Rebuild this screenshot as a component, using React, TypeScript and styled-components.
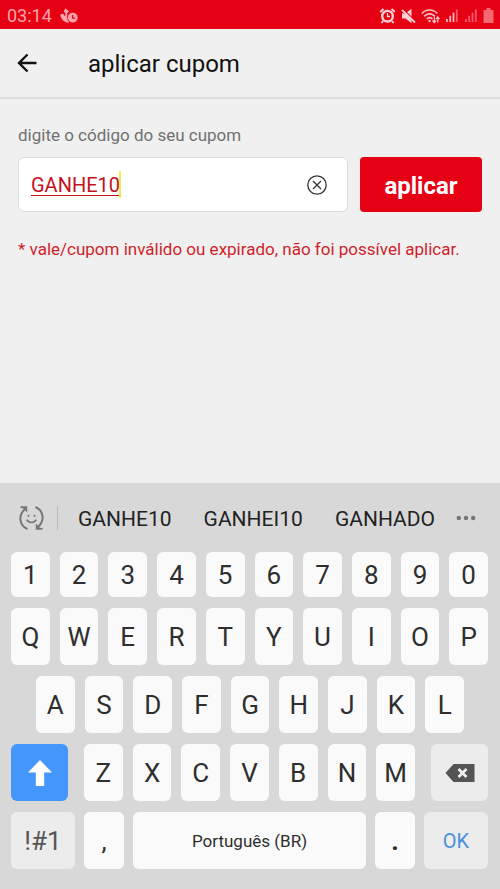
import React, { useState } from "react";
import styled, { createGlobalStyle } from "styled-components";

const GlobalStyle = createGlobalStyle`
  * { box-sizing: border-box; }
  body { margin: 0; background: #f0f0f0; }
  body, button, input { font-family: Roboto, "Liberation Sans", sans-serif; }
  button { margin: 0; padding: 0; border: 0; background: none; color: inherit; cursor: pointer; }
  svg { display: block; flex: none; }
`;

const Screen = styled.div`
  display: flex;
  flex-direction: column;
  min-height: 100vh;
  background: #f0f0f0;
`;

const StatusBar = styled.div`
  display: flex;
  align-items: center;
  height: 29px;
  padding: 2px 6px 0 7px;
  background: #e60014;
  color: #ffa3aa;
`;

const Clock = styled.time`
  margin-right: 8px;
  font-size: 18px;
  line-height: 24px;
`;

const StatusIcons = styled.div`
  display: flex;
  align-items: center;
  gap: 5px;
  margin-left: auto;
`;

const Header = styled.header`
  display: flex;
  align-items: center;
  height: 70px;
  padding: 0 16px;
  border-bottom: 2px solid #dcdcdc;
`;

const BackButton = styled.button`
  margin-right: 50px;
  color: #111;
`;

const Title = styled.h1`
  margin: 0;
  padding-top: 2px;
  font-size: 24px;
  line-height: 32px;
  font-weight: 400;
  color: #111;
`;

const Form = styled.form`
  padding: 24px 18px;
`;

const Label = styled.label`
  display: block;
  margin-bottom: 10px;
  font-size: 17px;
  line-height: 24px;
  color: #707070;
`;

const FieldRow = styled.div`
  display: flex;
  gap: 12px;
`;

const Field = styled.div`
  display: flex;
  align-items: center;
  flex: 1;
  min-width: 0;
  height: 55px;
  padding: 0 20px 0 12px;
  border: 1px solid #dcdcdc;
  border-radius: 6px;
  background: #fff;
`;

const CodeInput = styled.input`
  width: 88px;
  field-sizing: content;
  padding: 0;
  border: 0;
  outline: 0;
  background: none;
  font-size: 20px;
  line-height: 28px;
  color: #c4121d;
  caret-color: transparent;
  text-decoration: underline;
  text-decoration-thickness: 1px;
  text-underline-offset: 3px;
`;

const Caret = styled.span`
  width: 2px;
  height: 27px;
  background: #f7ea48;
`;

const ClearButton = styled.button`
  margin-left: auto;
  color: #333;
`;

const ApplyButton = styled.button`
  flex: none;
  width: 122px;
  height: 55px;
  padding-top: 2px;
  border-radius: 4px;
  background: #e60014;
  color: #fff;
  font-size: 24px;
  line-height: 32px;
  font-weight: 700;
`;

const ErrorText = styled.p`
  margin: 25px 0 0;
  font-size: 17px;
  line-height: 24px;
  color: #cf1f2b;
`;

const Keyboard = styled.section`
  display: flex;
  flex-direction: column;
  gap: 11px;
  margin-top: auto;
  padding-bottom: 20px;
  background: #d8d8d8;
`;

const SuggestionBar = styled.div`
  display: flex;
  align-items: center;
  height: 58px;
  padding: 12px 24px 0 18px;
  color: #757575;
`;

const Divider = styled.span`
  width: 1px;
  height: 24px;
  margin-left: 12px;
  background: #bbb;
`;

const Suggestions = styled.div`
  display: flex;
  flex: 1;
  justify-content: space-between;
  padding: 2px 21px 0 20px;
`;

const Suggestion = styled.button`
  font-size: 21px;
  line-height: 28px;
  color: #222;
`;

const KeyRow = styled.div<{ $columns: string; $gap?: number; $inset?: boolean }>`
  display: grid;
  grid-template-columns: ${(p) => p.$columns};
  gap: ${(p) => p.$gap ?? 10}px;
  padding: ${(p) => (p.$inset ? "0 36px" : "0 12px 0 11px")};
`;

const KeyGroup = styled.div`
  display: grid;
  grid-template-columns: repeat(7, minmax(0, 1fr));
  gap: 10px;
`;

type Tone = "light" | "muted" | "active" | "accent";
const keyBackground: Record<Tone, string> = {
  light: "#fafafa",
  muted: "#ececec",
  active: "#4397fb",
  accent: "#ececec",
};
const keyColor: Record<Tone, string> = {
  light: "#2e2e2e",
  muted: "#555",
  active: "#fff",
  accent: "#4690dc",
};

const Key = styled.button<{ $tone?: Tone; $short?: boolean; $size?: number; $bold?: boolean }>`
  display: flex;
  align-items: center;
  justify-content: center;
  height: ${(p) => (p.$short ? 45 : 57)}px;
  border-radius: 6px;
  background: ${(p) => keyBackground[p.$tone ?? "light"]};
  color: ${(p) => keyColor[p.$tone ?? "light"]};
  font-size: ${(p) => p.$size ?? 26}px;
  font-weight: ${(p) => (p.$bold ? 700 : 400)};
  line-height: 32px;
`;

const BackIcon = () => (
  <svg width="22" height="20" viewBox="0 0 22 20" fill="none" stroke="currentColor" strokeWidth="2.4">
    <path d="M20.5 10H3M11.5 1.5L3 10l8.500 8.500" />
  </svg>
);

const CallTimerIcon = () => (
  <svg width="19" height="16" viewBox="0 0 19 16">
    <path
      fill="currentColor"
      d="M5.500.2L9 3.600 7.300 5.300v3.200L9 11.500l-.5 3.200C4.500 14.500 1 11.500.2 6.800L2.800 5.500 5 8.300 5.500 6 3.800 3z"
    />
    <circle cx="12.800" cy="9.600" r="5.300" fill="currentColor" stroke="#e60014" strokeWidth=".8" />
    <path d="M12.500 7v3.200h2.500" fill="none" stroke="#e60014" strokeWidth="1.200" />
  </svg>
);

const AlarmIcon = () => (
  <svg width="17" height="16" viewBox="0 0 17 16" fill="none" stroke="#ffd0d3">
    <circle cx="8.500" cy="8.200" r="5.300" strokeWidth="2.400" />
    <path d="M1.200 4L4.500 1M15.800 4L12.500 1M4 13l-1.500 2M13 13l1.500 2" strokeWidth="2" />
    <path d="M8.500 5v3.500h2.500" strokeWidth="1.300" />
  </svg>
);

const MuteIcon = () => (
  <svg width="15" height="16" viewBox="0 0 15 16">
    <path fill="#ffd0d3" d="M1 5.500h3.500L10.500.8v14.400L4.500 10.500H1z" />
    <path d="M2.500 1.500l12 12" stroke="#e60014" strokeWidth="1.500" />
    <path d="M1 2l13 12.500" stroke="#ffd0d3" strokeWidth="1.800" />
  </svg>
);

const WifiIcon = () => (
  <svg width="19" height="16" viewBox="0 0 19 16" fill="none" stroke="#ffc2c7" strokeWidth="1.700">
    <path d="M.8 5.500c4.300-4.700 11.200-4.700 15.500 0M3.200 8.300c3-3.200 7.700-3.200 10.700 0M5.700 11c1.700-1.800 4-1.800 5.700 0" />
    <circle cx="8.500" cy="13" r="1.200" fill="#ffc2c7" stroke="none" />
    <path d="M13.300 9v5M11.500 12.500l1.800 2 1.800-2M16.800 14.500v-5M15 11l1.800-2 1.700 2" strokeWidth="1.200" />
  </svg>
);

const SignalIcon = ({ strength }: { strength: number }) => (
  <svg width="14" height="15" viewBox="0 0 14 15">
    {[0, 1, 2, 3].map((bar) => (
      <rect
        key={bar}
        x={1 + bar * 3.3}
        y={11 - bar * 3.2}
        width="1.800"
        height={3 + bar * 3.2}
        fill="#ffb5bb"
        opacity={bar < strength ? 1 : 0.5}
      />
    ))}
  </svg>
);

const BatteryIcon = () => (
  <svg width="11" height="15" viewBox="0 0 11 15">
    <path fill="#f4686f" d="M3.500 0h4v2H10.500v13H.5V2h3z" />
  </svg>
);

const ClearIcon = () => (
  <svg width="20" height="20" viewBox="0 0 20 20" fill="none" stroke="currentColor" strokeWidth="1.300">
    <circle cx="10" cy="10" r="9.200" />
    <path d="M6 6l8 8M14 6l-8 8" />
  </svg>
);

const EmojiCycleIcon = () => (
  <svg width="27" height="26" viewBox="0 0 27 26" fill="none" stroke="currentColor" strokeWidth="2">
    <path d="M9.500 24C1.500 20.500-.5 10.500 7.500 3.500" />
    <path d="M17.500 2C25.500 5.500 27.500 15.500 19.500 22.500" />
    <path d="M2.500 1.300h6.700v6.200L7 5.300 5.300 3.300 2.500 3zM24.500 24.700h-6.700v-6.200L20 20.700l1.700 2 2.800.3z" fill="currentColor" stroke="none" />
    <path d="M8.800 14.700c2 3.800 7.400 3.800 9.400 0" strokeWidth="1.600" />
    <circle cx="10.500" cy="10.800" r="1.100" fill="currentColor" stroke="none" />
    <circle cx="16.500" cy="10.800" r="1.100" fill="currentColor" stroke="none" />
  </svg>
);

const MoreIcon = () => (
  <svg width="20" height="6" viewBox="0 0 20 6" fill="currentColor">
    <circle cx="2.800" cy="3" r="2.200" />
    <circle cx="10" cy="3" r="2.200" />
    <circle cx="17.200" cy="3" r="2.200" />
  </svg>
);

const ShiftIcon = () => (
  <svg width="24" height="26" viewBox="0 0 24 26" fill="currentColor">
    <path d="M12 0l12 12.500h-7.800V26H7.800V12.500H0z" />
  </svg>
);

const BackspaceIcon = () => (
  <svg width="30" height="18" viewBox="0 0 30 18">
    <path d="M8.500 0H29.500v18H8.500L.5 9z" fill="#555" />
    <path d="M13.500 5l8 8M21.500 5l-8 8" stroke="#f2f2f2" strokeWidth="2.600" />
  </svg>
);

export default function App() {
  const [code, setCode] = useState("GANHE10");
  const type = (character: string) => setCode(code + character);
  const letters = (text: string, short = false) =>
    text.split("").map((character) => (
      <Key key={character} type="button" $short={short} onClick={() => type(character)}>
        {character}
      </Key>
    ));

  return (
    <Screen>
      <GlobalStyle />
      <StatusBar>
        <Clock>03:14</Clock>
        <CallTimerIcon />
        <StatusIcons>
          <AlarmIcon />
          <MuteIcon />
          <WifiIcon />
          <SignalIcon strength={3} />
          <SignalIcon strength={0} />
          <BatteryIcon />
        </StatusIcons>
      </StatusBar>

      <Header>
        <BackButton type="button" aria-label="voltar">
          <BackIcon />
        </BackButton>
        <Title>aplicar cupom</Title>
      </Header>

      <Form onSubmit={(event) => event.preventDefault()}>
        <Label htmlFor="code">digite o código do seu cupom</Label>
        <FieldRow>
          <Field>
            <CodeInput
              id="code"
              value={code}
              spellCheck={false}
              aria-describedby="code-error"
              onChange={(event) => setCode(event.target.value)}
            />
            <Caret />
            <ClearButton type="button" aria-label="limpar" onClick={() => setCode("")}>
              <ClearIcon />
            </ClearButton>
          </Field>
          <ApplyButton type="submit">aplicar</ApplyButton>
        </FieldRow>
        <ErrorText id="code-error">* vale/cupom inválido ou expirado, não foi possível aplicar.</ErrorText>
      </Form>

      <Keyboard>
        <SuggestionBar>
          <button type="button" aria-label="emojis">
            <EmojiCycleIcon />
          </button>
          <Divider />
          <Suggestions>
            {["GANHE10", "GANHEI10", "GANHADO"].map((word) => (
              <Suggestion key={word} type="button" onClick={() => setCode(word)}>
                {word}
              </Suggestion>
            ))}
          </Suggestions>
          <button type="button" aria-label="mais">
            <MoreIcon />
          </button>
        </SuggestionBar>

        <KeyRow $columns="repeat(10, minmax(0, 1fr))">{letters("1234567890", true)}</KeyRow>
        <KeyRow $columns="repeat(10, minmax(0, 1fr))">{letters("QWERTYUIOP")}</KeyRow>
        <KeyRow $columns="repeat(9, minmax(0, 1fr))" $inset>
          {letters("ASDFGHJKL")}
        </KeyRow>
        <KeyRow $columns="57fr 331fr 57fr" $gap={16}>
          <Key type="button" $tone="active" aria-label="shift">
            <ShiftIcon />
          </Key>
          <KeyGroup>{letters("ZXCVBNM")}</KeyGroup>
          <Key type="button" $tone="muted" aria-label="apagar" onClick={() => setCode(code.slice(0, -1))}>
            <BackspaceIcon />
          </Key>
        </KeyRow>
        <KeyRow $columns="64fr 40fr 233fr 40fr 64fr" $gap={9}>
          <Key type="button" $tone="muted">!#1</Key>
          <Key type="button" onClick={() => type(",")}>,</Key>
          <Key type="button" $size={17} onClick={() => type(" ")}>Português (BR)</Key>
          <Key type="button" $bold onClick={() => type(".")}>.</Key>
          <Key type="button" $tone="accent" $size={20}>OK</Key>
        </KeyRow>
      </Keyboard>
    </Screen>
  );
}
